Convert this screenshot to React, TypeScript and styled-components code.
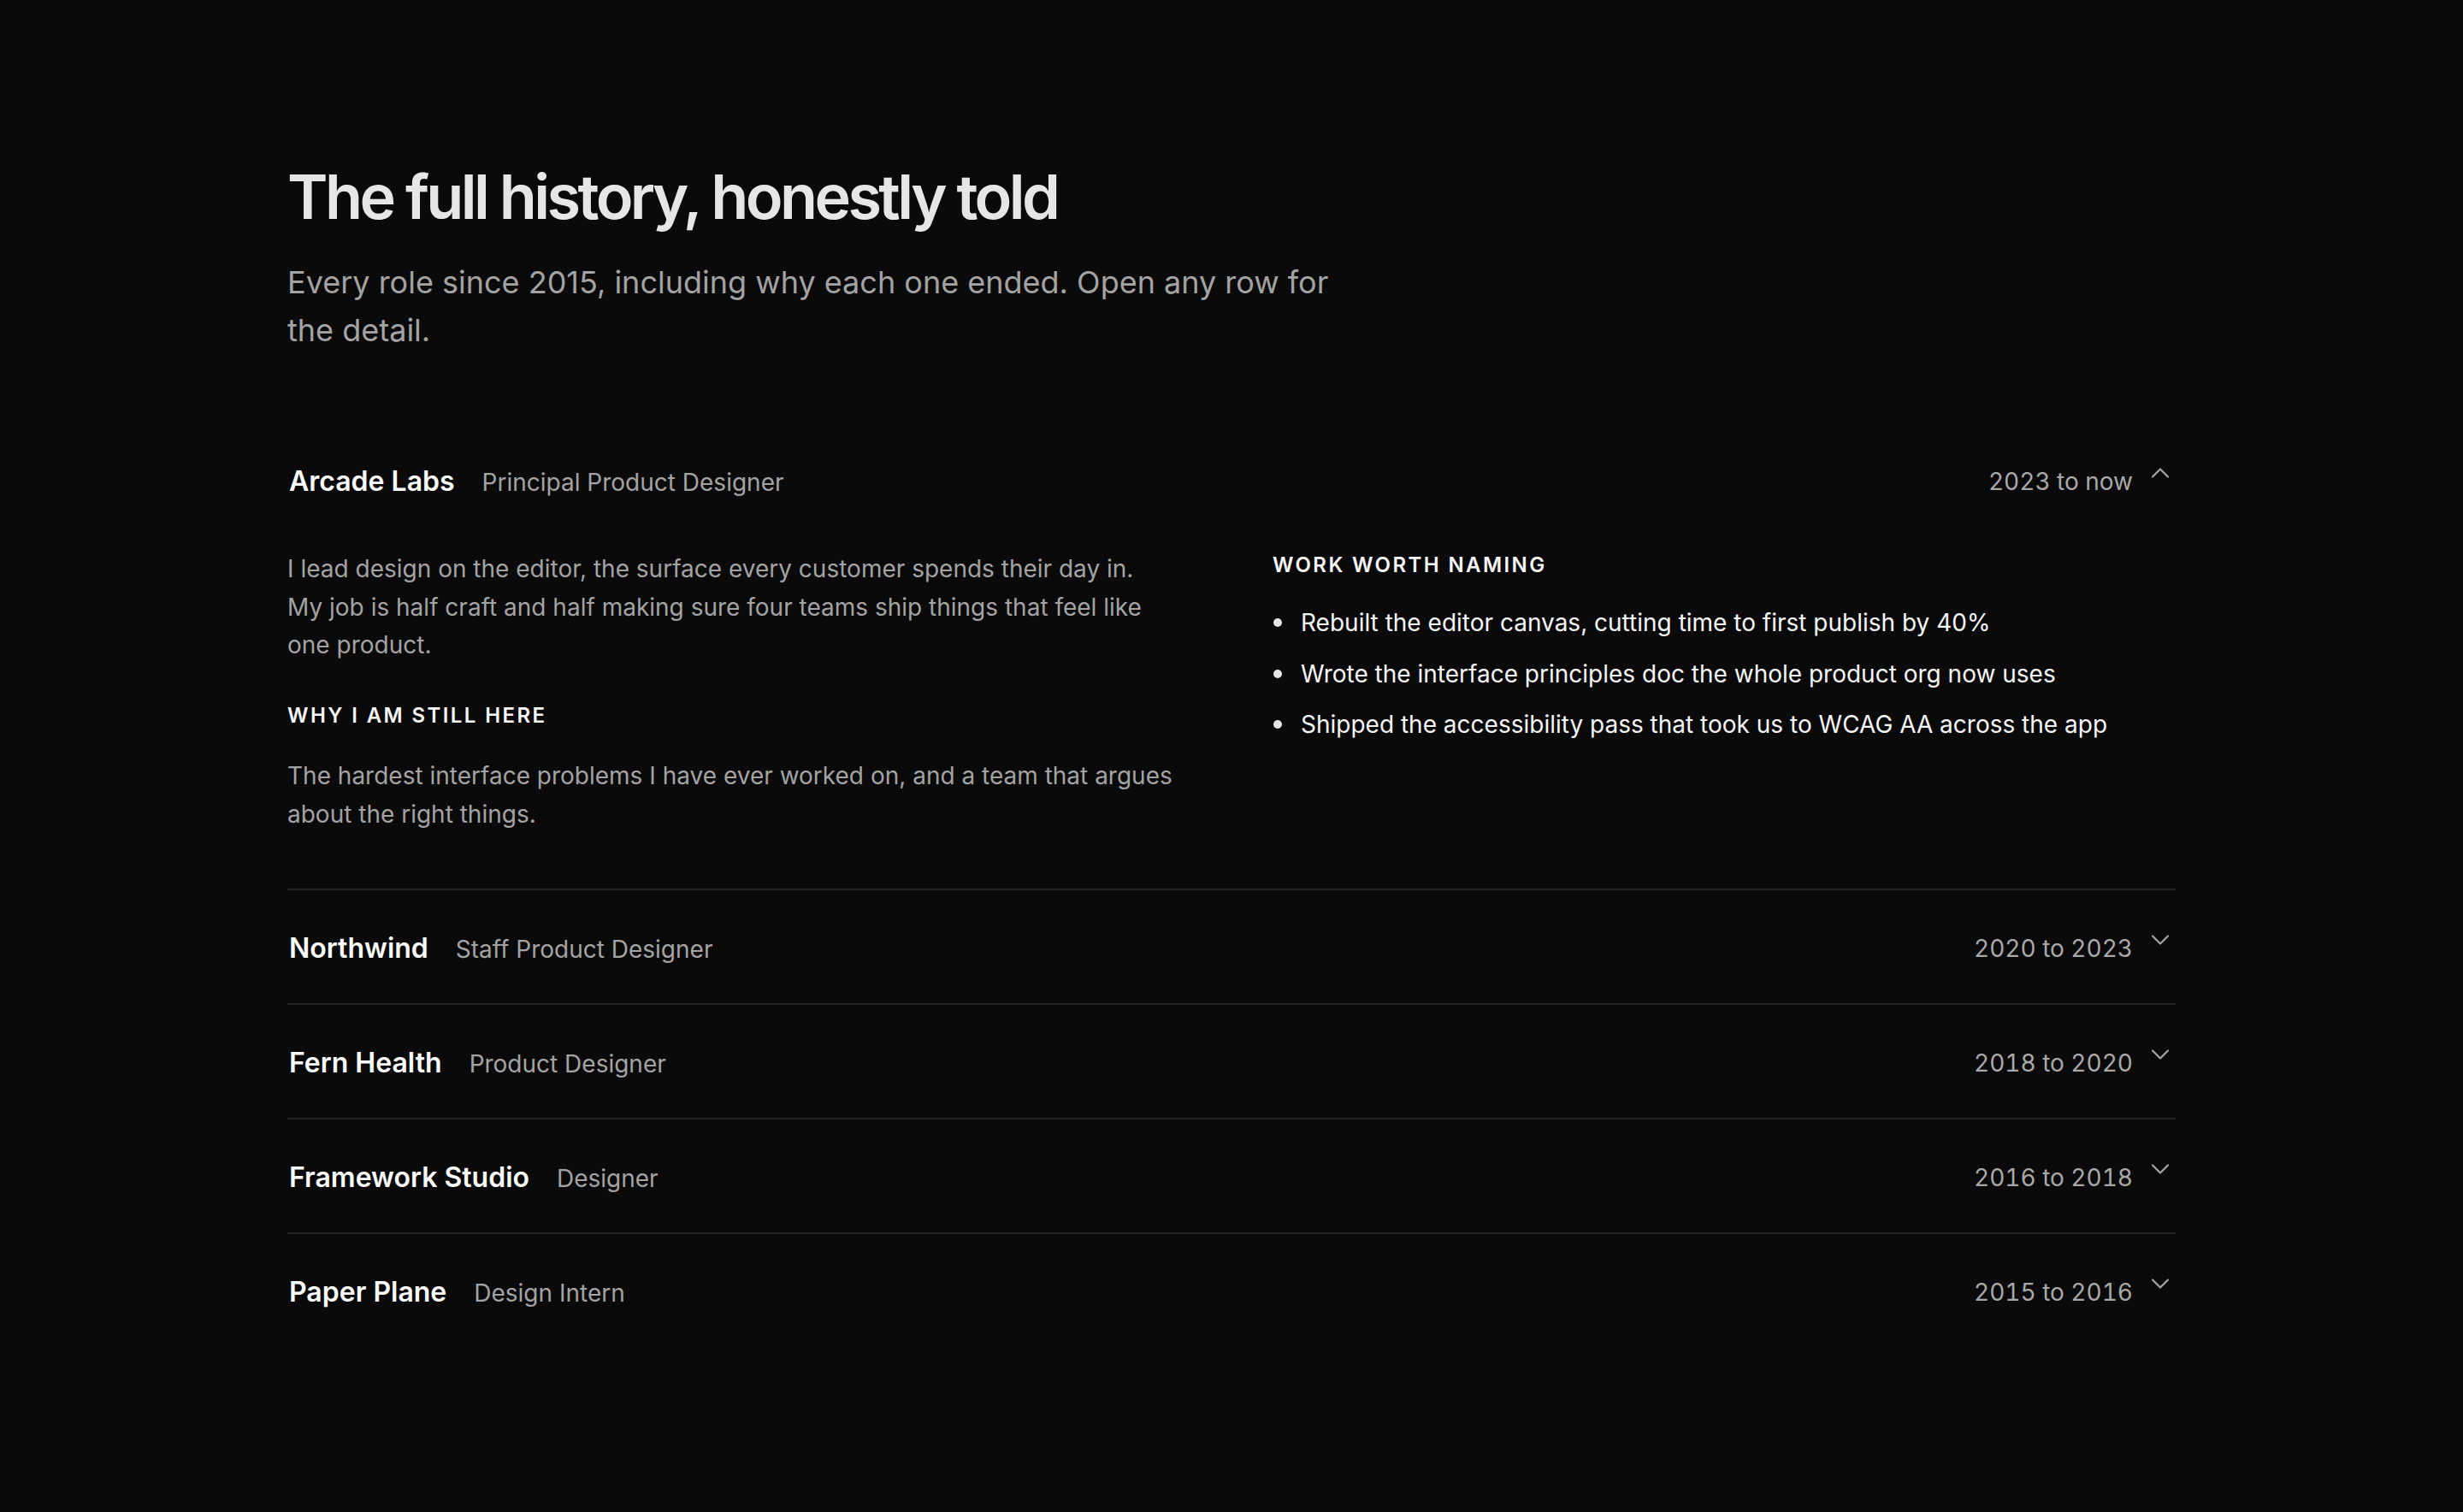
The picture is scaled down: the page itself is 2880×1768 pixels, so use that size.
import React, { useState } from "react";
import styled, { createGlobalStyle } from "styled-components";
import { ChevronDown, ChevronUp } from "lucide-react";

const GlobalStyle = createGlobalStyle`
  html, body {
    margin: 0;
    padding: 0;
    background: #0a0a0a;
  }
  body {
    font-family: Inter, "Noto Sans", "Liberation Sans", sans-serif;
    -webkit-font-smoothing: antialiased;
  }
  * { box-sizing: border-box; }
`;

const Page = styled.main`
  max-width: 2400px;
  margin: 0 auto;
  padding: 190px 96px 192px;
  color: #fafafa;
`;

const Title = styled.h1`
  margin: 0 0 34px;
  font-size: 72px;
  line-height: 1.1;
  font-weight: 600;
  letter-spacing: -0.05em;
  color: #e6e6e6;
`;

const Lead = styled.p`
  margin: 0;
  max-width: 1240px;
  font-size: 36px;
  line-height: 1.55;
  color: #a3a3a3;
`;

const List = styled.div`
  margin-top: 80px;
`;

const Item = styled.section`
  & + & {
    border-top: 2px solid #222222;
  }
`;

const RowButton = styled.button`
  display: flex;
  width: 100%;
  align-items: center;
  justify-content: space-between;
  padding: 40px 0 36px;
  margin: 0;
  border: 0;
  background: none;
  color: inherit;
  font: inherit;
  text-align: left;
  cursor: pointer;
`;

const Heading = styled.div`
  display: flex;
  align-items: baseline;
  gap: 32px;
  padding-left: 2px;
`;

const Company = styled.span`
  font-size: 32px;
  line-height: 56px;
  font-weight: 600;
  color: #fafafa;
`;

const Role = styled.span`
  font-size: 28px;
  color: #a3a3a3;
`;

const Meta = styled.div`
  display: flex;
  align-items: flex-start;
  gap: 14px;
`;

const Dates = styled.span`
  font-size: 28px;
  line-height: 56px;
  color: #a8a8a8;
  font-variant-numeric: tabular-nums;
`;

const Toggle = styled.span`
  display: flex;
  width: 36px;
  height: 36px;
  color: #a3a3a3;
`;

const Detail = styled.div`
  display: grid;
  grid-template-columns: minmax(0, 1fr) minmax(0, 1fr);
  column-gap: 96px;
  padding: 16px 0 64px;
`;

const Column = styled.div`
  display: flex;
  flex-direction: column;
`;

const Body = styled.p`
  margin: 0;
  max-width: 37em;
  font-size: 28px;
  line-height: 1.6;
  color: #a3a3a3;
`;

const Label = styled.h4<{ $spaced?: boolean }>`
  margin: ${(p) => (p.$spaced ? "42px 0 30px" : "0 0 27px")};
  font-size: 24px;
  line-height: 36px;
  font-weight: 600;
  letter-spacing: 0.1em;
  text-transform: uppercase;
  color: #f5f5f5;
`;

const Wins = styled.ul`
  list-style: none;
  margin: 0;
  padding: 0;
  display: flex;
  flex-direction: column;
  gap: 15px;
`;

const Win = styled.li`
  display: flex;
  align-items: flex-start;
  gap: 22px;
  font-size: 28px;
  line-height: 1.6;
  color: #f5f5f5;

  &::before {
    content: "";
    flex: none;
    width: 10px;
    height: 10px;
    margin: 17px 0 0 1px;
    border-radius: 50%;
    background: #e5e5e5;
  }
`;

type Role = {
  company: string;
  title: string;
  dates: string;
  summary?: string;
  reason?: string;
  reasonLabel?: string;
  wins?: string[];
};

const roles: Role[] = [
  {
    company: "Arcade Labs",
    title: "Principal Product Designer",
    dates: "2023 to now",
    summary:
      "I lead design on the editor, the surface every customer spends their day in. My job is half craft and half making sure four teams ship things that feel like one product.",
    reasonLabel: "Why I am still here",
    reason:
      "The hardest interface problems I have ever worked on, and a team that argues about the right things.",
    wins: [
      "Rebuilt the editor canvas, cutting time to first publish by 40%",
      "Wrote the interface principles doc the whole product org now uses",
      "Shipped the accessibility pass that took us to WCAG AA across the app",
    ],
  },
  { company: "Northwind", title: "Staff Product Designer", dates: "2020 to 2023" },
  { company: "Fern Health", title: "Product Designer", dates: "2018 to 2020" },
  { company: "Framework Studio", title: "Designer", dates: "2016 to 2018" },
  { company: "Paper Plane", title: "Design Intern", dates: "2015 to 2016" },
];

export default function App() {
  const [open, setOpen] = useState<number | null>(0);

  return (
    <>
      <GlobalStyle />
      <Page>
        <Title>The full history, honestly told</Title>
        <Lead>
          Every role since 2015, including why each one ended. Open any row for the detail.
        </Lead>
        <List>
          {roles.map((r, i) => {
            const isOpen = open === i;
            return (
              <Item key={r.company}>
                <RowButton
                  aria-expanded={isOpen}
                  onClick={() => setOpen(isOpen ? null : i)}
                >
                  <Heading>
                    <Company>{r.company}</Company>
                    <Role>{r.title}</Role>
                  </Heading>
                  <Meta>
                    <Dates>{r.dates}</Dates>
                    <Toggle>
                      {isOpen ? (
                        <ChevronUp size={36} strokeWidth={1.5} />
                      ) : (
                        <ChevronDown size={36} strokeWidth={1.5} />
                      )}
                    </Toggle>
                  </Meta>
                </RowButton>
                {isOpen && r.summary && (
                  <Detail>
                    <Column>
                      <Body>{r.summary}</Body>
                      {r.reason && (
                        <>
                          <Label $spaced>{r.reasonLabel}</Label>
                          <Body>{r.reason}</Body>
                        </>
                      )}
                    </Column>
                    <Column>
                      <Label>Work worth naming</Label>
                      <Wins>
                        {r.wins?.map((w) => (
                          <Win key={w}>{w}</Win>
                        ))}
                      </Wins>
                    </Column>
                  </Detail>
                )}
              </Item>
            );
          })}
        </List>
      </Page>
    </>
  );
}
